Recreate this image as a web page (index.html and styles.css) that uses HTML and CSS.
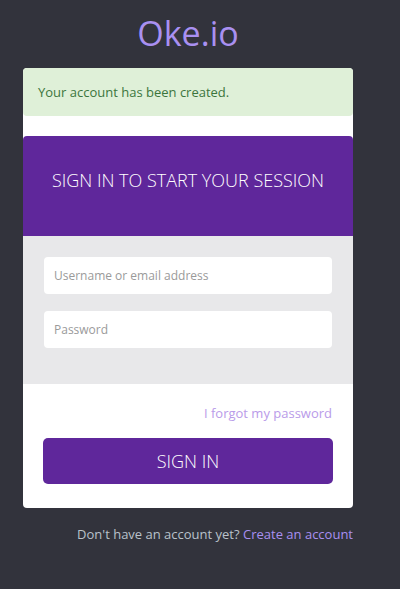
FILE: index.html
```html
<!DOCTYPE html>
<html lang="en">
<head>
    <meta charset="UTF-8">
    <meta name="viewport" content="width=device-width, initial-scale=1.0">
    <title>Oke.io - Sign in</title>
    <link rel="stylesheet" href="styles.css">
</head>
<body>
    <div class="login-box">
        <h1 class="logo">Oke.io</h1>

        <div class="card">
            <div class="alert">Your account has been created.</div>

            <div class="card-header">Sign in to start your session</div>

            <div class="card-fields">
                <input type="text" class="field" placeholder="Username or email address">
                <input type="password" class="field" placeholder="Password">
            </div>

            <div class="card-footer">
                <a href="#" class="forgot">I forgot my password</a>
                <button class="btn-signin">Sign in</button>
            </div>
        </div>

        <p class="register">Don't have an account yet? <a href="#">Create an account</a></p>
    </div>
</body>
</html>
```

FILE: styles.css
```css
body {
    font-family: 'Open Sans', sans-serif;
    margin: 0;
    background-color: #32333c;
    height: 100vh;
}

.login-box {
    width: 330px;
    padding-left: 23px;
}

.logo {
    font-size: 34px;
    font-weight: 400;
    color: #a990f1;
    text-align: center;
    margin: 0;
    padding-top: 11px;
    height: 57px;
    line-height: 44px;
}

.card {
    background-color: #fff;
    border-radius: 4px;
    padding-bottom: 24px;
}

.alert {
    background-color: #dff0d8;
    color: #3c763d;
    font-size: 13px;
    height: 48px;
    line-height: 48px;
    padding: 0 15px;
    border-radius: 4px;
    margin-bottom: 20px;
}

.card-header {
    background-color: #5f279b;
    color: #fff;
    font-size: 18px;
    font-weight: 300;
    text-transform: uppercase;
    text-align: center;
    height: 100px;
    line-height: 88px;
    border-radius: 4px 4px 0 0;
}

.card-fields {
    background-color: #e8e8ea;
    padding: 21px 21px 36px;
    display: flex;
    flex-direction: column;
    gap: 17px;
}

.field {
    font-family: 'Open Sans', sans-serif;
    font-size: 12px;
    height: 37px;
    border: none;
    border-radius: 4px;
    padding: 0 10px;
    background-color: #fff;
    outline: none;
}

.field::placeholder {
    color: #9a9a9a;
}

.card-footer {
    padding: 20px 20px 0;
    display: flex;
    flex-direction: column;
}

.forgot {
    align-self: flex-end;
    font-size: 13px;
    color: #b99be9;
    text-decoration: none;
    line-height: 18px;
    margin-right: 1px;
}

.btn-signin {
    margin-top: 16px;
    height: 46px;
    background-color: #5f279b;
    color: #fff;
    border: none;
    border-radius: 5px;
    font-family: 'Open Sans', sans-serif;
    font-size: 18px;
    font-weight: 300;
    text-transform: uppercase;
    cursor: pointer;
}

.register {
    font-size: 13px;
    color: #b9c2cb;
    text-align: right;
    margin: 17px 0 0;
}

.register a {
    color: #a990f1;
    text-decoration: none;
}
```
